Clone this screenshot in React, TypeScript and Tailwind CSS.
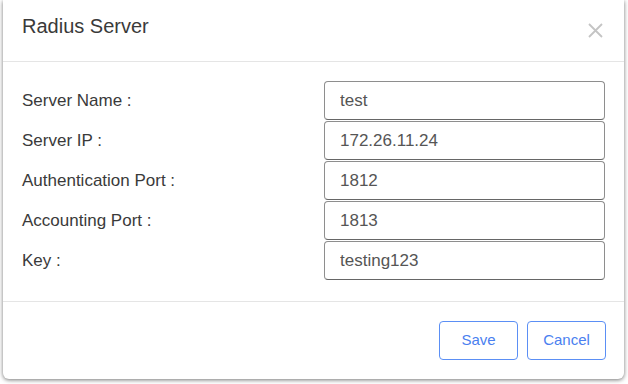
import { useState } from "react";

const fields = [
  { label: "Server Name :", value: "test" },
  { label: "Server IP :", value: "172.26.11.24" },
  { label: "Authentication Port :", value: "1812" },
  { label: "Accounting Port :", value: "1813" },
  { label: "Key :", value: "testing123" },
];

export default function App() {
  const [values, setValues] = useState(fields.map((f) => f.value));

  return (
    <div
      className="w-[628px] h-[384px] bg-white pl-[3px] overflow-hidden"
      style={{ fontFamily: '"Liberation Sans", Arial, sans-serif' }}
    >
      <div className="w-[621px] h-[379px] bg-white rounded-b-[6px] shadow-[0_1px_4px_rgba(0,0,0,0.55)] flex flex-col">
        {/* Header */}
        <div className="h-[62px] border-b border-[#e5e5e5] flex items-start justify-between pl-[19px] pr-[21px]">
          <h1 className="text-[20px] leading-none text-[#3a3a3a] mt-[16px]">Radius Server</h1>
          <button className="mt-[23px] w-[15px] h-[15px] text-[#c4c4c4]">
            <svg viewBox="0 0 15 15" className="w-[15px] h-[15px]" fill="none" stroke="currentColor" strokeWidth="1.8">
              <path d="M1 1L14 14M14 1L1 14" />
            </svg>
          </button>
        </div>

        {/* Body */}
        <div className="h-[240px] border-b border-[#e5e5e5] pt-[19px] pl-[19px] flex flex-col gap-[1px]">
          {fields.map((f, i) => (
            <div key={f.label} className="flex items-center h-[39px]">
              <label className="w-[302px] text-[17px] text-[#3a3a3a]">{f.label}</label>
              <input
                className="w-[281px] h-[39px] rounded-[4px] border border-[#8e8e8e] border-b-[#666] px-[15px] text-[17px] text-[#555] outline-none"
                value={values[i]}
                onChange={(e) => {
                  const next = [...values];
                  next[i] = e.target.value;
                  setValues(next);
                }}
              />
            </div>
          ))}
        </div>

        {/* Footer */}
        <div className="flex justify-end gap-[9px] pt-[19px] pr-[18px]">
          <button className="w-[79px] h-[39px] rounded-[4px] border border-[#5b8ff5] text-[15px] text-[#4a7ff0]">
            Save
          </button>
          <button className="w-[79px] h-[39px] rounded-[4px] border border-[#5b8ff5] text-[15px] text-[#4a7ff0]">
            Cancel
          </button>
        </div>
      </div>
    </div>
  );
}
